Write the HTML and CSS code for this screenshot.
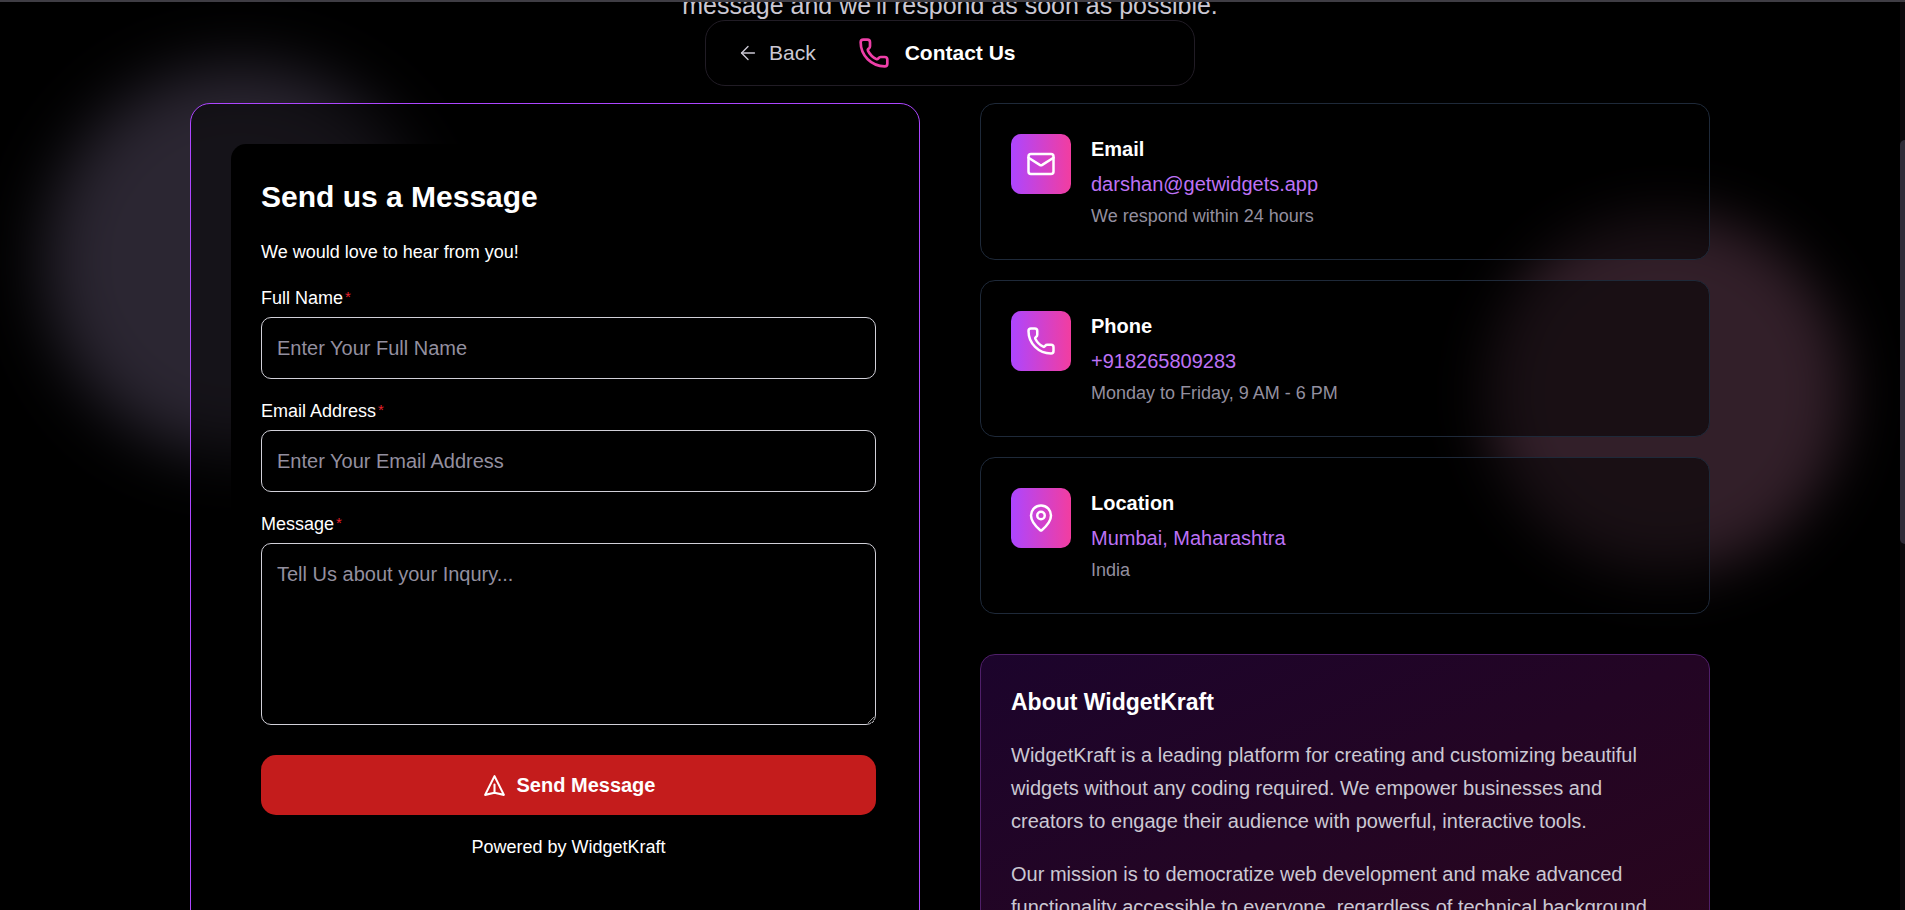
FILE: index.html
```html
<!DOCTYPE html>
<html lang="en">
<head>
    <meta charset="UTF-8">
    <meta name="viewport" content="width=device-width, initial-scale=1.0">
    <title>Contact Us - WidgetKraft</title>
    <link rel="stylesheet" href="styles.css">
</head>
<body>
    <div class="page">
        <!-- Background glow -->
        <div class="glow glow-left"></div>
        <div class="glow glow-right"></div>

        <!-- Floating nav -->
        <nav class="navbar">
            <a href="#" class="back-link">
                <svg class="icon-back" viewBox="0 0 24 24"><path d="m12 19-7-7 7-7"/><path d="M19 12H5"/></svg>
                Back
            </a>
            <div class="nav-title">
                <svg class="icon-nav" viewBox="0 0 24 24"><path d="M13.832 16.568a1 1 0 0 0 1.213-.303l.355-.465A2 2 0 0 1 17 15h3a2 2 0 0 1 2 2v3a2 2 0 0 1-2 2A18 18 0 0 1 2 4a2 2 0 0 1 2-2h3a2 2 0 0 1 2 2v3a2 2 0 0 1-.8 1.6l-.468.351a1 1 0 0 0-.292 1.233 14 14 0 0 0 6.392 6.384"/></svg>
                <h1>Contact Us</h1>
            </div>
        </nav>

        <main class="container">
            <p class="intro">message and we'll respond as soon as possible.</p>

            <div class="contact-grid">
                <!-- Contact form -->
                <section class="form-card">
                    <form class="contact-form">
                        <h2>Send us a Message</h2>
                        <p class="form-text">We would love to hear from you!</p>

                        <div class="field">
                            <label for="full-name">Full Name<span class="required">*</span></label>
                            <input type="text" id="full-name" placeholder="Enter Your Full Name">
                        </div>
                        <div class="field">
                            <label for="email">Email Address<span class="required">*</span></label>
                            <input type="email" id="email" placeholder="Enter Your Email Address">
                        </div>
                        <div class="field">
                            <label for="message">Message<span class="required">*</span></label>
                            <textarea id="message" placeholder="Tell Us about your Inqury..."></textarea>
                        </div>

                        <button type="submit" class="btn">
                            <svg class="icon-send" viewBox="0 0 24 24"><path d="m12 19 9 2-9-18-9 18 9-2zm0 0v-8"/></svg>
                            Send Message
                        </button>
                        <p class="powered">Powered by WidgetKraft</p>
                    </form>
                </section>

                <!-- Contact details -->
                <div class="info-column">
                    <div class="info-list">
                        <div class="info-card">
                            <div class="info-icon">
                                <svg viewBox="0 0 24 24"><path d="m22 7-8.991 5.727a2 2 0 0 1-2.009 0L2 7"/><rect x="2" y="4" width="20" height="16" rx="2"/></svg>
                            </div>
                            <div>
                                <h3>Email</h3>
                                <a href="mailto:darshan@getwidgets.app" class="info-value">darshan@getwidgets.app</a>
                                <p class="info-note">We respond within 24 hours</p>
                            </div>
                        </div>
                        <div class="info-card">
                            <div class="info-icon">
                                <svg viewBox="0 0 24 24"><path d="M13.832 16.568a1 1 0 0 0 1.213-.303l.355-.465A2 2 0 0 1 17 15h3a2 2 0 0 1 2 2v3a2 2 0 0 1-2 2A18 18 0 0 1 2 4a2 2 0 0 1 2-2h3a2 2 0 0 1 2 2v3a2 2 0 0 1-.8 1.6l-.468.351a1 1 0 0 0-.292 1.233 14 14 0 0 0 6.392 6.384"/></svg>
                            </div>
                            <div>
                                <h3>Phone</h3>
                                <a href="tel:+918265809283" class="info-value">+918265809283</a>
                                <p class="info-note">Monday to Friday, 9 AM - 6 PM</p>
                            </div>
                        </div>
                        <div class="info-card">
                            <div class="info-icon">
                                <svg viewBox="0 0 24 24"><path d="M20 10c0 4.993-5.539 10.193-7.399 11.799a1 1 0 0 1-1.202 0C9.539 20.193 4 14.993 4 10a8 8 0 0 1 16 0"/><circle cx="12" cy="10" r="3"/></svg>
                            </div>
                            <div>
                                <h3>Location</h3>
                                <p class="info-value">Mumbai, Maharashtra</p>
                                <p class="info-note">India</p>
                            </div>
                        </div>
                    </div>

                    <section class="about-card">
                        <h2>About WidgetKraft</h2>
                        <p>WidgetKraft is a leading platform for creating and customizing beautiful widgets without any coding required. We empower businesses and creators to engage their audience with powerful, interactive tools.</p>
                        <p>Our mission is to democratize web development and make advanced functionality accessible to everyone, regardless of technical background.</p>
                    </section>
                </div>
            </div>
        </main>
    </div>
    <div class="scroll-track">
        <div class="scroll-thumb"></div>
    </div>
</body>
</html>
```
FILE: styles.css
```css
* {
    margin: 0;
    padding: 0;
    box-sizing: border-box;
}
body {
    font-family: 'Liberation Sans', Arial, sans-serif;
    font-size: 20px;
    line-height: 30px;
    background: #000;
    color: white;
    height: 100vh;
    display: flex;
    overflow: hidden;
}
body::before {
    content: "";
    position: fixed;
    top: 0;
    left: 0;
    right: 0;
    height: 2px;
    background: #3f3d44;
    z-index: 20;
}
a {
    color: inherit;
    text-decoration: none;
}
svg {
    fill: none;
    stroke: currentColor;
    stroke-width: 2;
    stroke-linecap: round;
    stroke-linejoin: round;
    flex-shrink: 0;
}
.page {
    position: relative;
    flex: 1;
    overflow: hidden;
}

/* Background glow */
.glow {
    position: absolute;
    border-radius: 50%;
}
.glow-left {
    top: 66px;
    left: 45px;
    width: 390px;
    height: 390px;
    background: #2b2632;
    filter: blur(32px);
}
.glow-right {
    top: 213px;
    right: 55px;
    width: 360px;
    height: 360px;
    background: #321f29;
    filter: blur(28px);
}

/* Floating nav */
.navbar {
    position: absolute;
    top: 20px;
    left: 50%;
    transform: translateX(-50%);
    width: 490px;
    display: flex;
    align-items: center;
    gap: 42px;
    padding: 16px 31px;
    background: #000;
    border: 1px solid #211c25;
    border-radius: 20px;
    z-index: 10;
}
.back-link {
    display: flex;
    align-items: center;
    gap: 10px;
    font-size: 21px;
    color: #cbc8d3;
}
.icon-back {
    width: 22px;
    height: 22px;
    stroke-width: 1.5;
}
.nav-title {
    display: flex;
    align-items: center;
    gap: 15px;
}
.nav-title h1 {
    font-size: 21px;
}
.icon-nav {
    width: 32px;
    height: 32px;
    color: #ee3fa8;
}

/* Content */
.container {
    position: relative;
    max-width: 1600px;
    margin: 0 auto;
    padding: 0 40px;
}
.intro {
    margin-top: -15px;
    margin-bottom: 78px;
    font-size: 25px;
    line-height: 40px;
    text-align: center;
    color: #cbc8d3;
}
.contact-grid {
    display: grid;
    grid-template-columns: 1fr 1fr;
    gap: 60px;
}

/* Contact form */
.form-card {
    padding: 40px 13px 40px 40px;
    background: rgba(0, 0, 0, 0.5);
    border: 1px solid #ad46ff;
    border-radius: 20px;
}
.contact-form {
    padding: 30px;
    background: #000;
    border-radius: 15px;
}
.contact-form h2 {
    margin-bottom: 20px;
    font-size: 30px;
    line-height: 45px;
}
.form-text {
    margin-bottom: 20px;
    font-size: 18px;
    line-height: 26px;
}
.field {
    display: flex;
    flex-direction: column;
    gap: 6px;
    margin-bottom: 19px;
}
.field label {
    font-size: 18px;
    line-height: 26px;
}
.required {
    margin-left: 2px;
    font-size: 15px;
    line-height: 20px;
    vertical-align: 2px;
    color: #e7222b;
}
.field input,
.field textarea {
    width: 100%;
    padding: 15px;
    font-family: inherit;
    font-size: 20px;
    line-height: 30px;
    color: white;
    background: #000;
    border: 1px solid #d1d0d8;
    border-radius: 10px;
}
.field input {
    height: 62px;
}
.field textarea {
    height: 182px;
    resize: vertical;
}
.field ::placeholder {
    color: #938f9f;
}
.btn {
    display: flex;
    justify-content: center;
    align-items: center;
    gap: 10px;
    width: 100%;
    margin-top: 30px;
    padding: 15px;
    font-family: inherit;
    font-size: 20px;
    font-weight: 700;
    line-height: 30px;
    color: white;
    background: #c41c1c;
    border: none;
    border-radius: 15px;
    cursor: pointer;
}
.btn:hover {
    background: #a81717;
}
.icon-send {
    width: 25px;
    height: 25px;
}
.powered {
    margin-top: 19px;
    font-size: 18px;
    line-height: 26px;
    text-align: center;
}

/* Contact details */
.info-column {
    display: flex;
    flex-direction: column;
    gap: 40px;
}
.info-list {
    display: flex;
    flex-direction: column;
    gap: 20px;
}
.info-card {
    display: flex;
    align-items: flex-start;
    gap: 20px;
    padding: 30px;
    background: rgba(0, 0, 0, 0.5);
    border: 1px solid #1e2939;
    border-radius: 15px;
}
.info-icon {
    display: flex;
    justify-content: center;
    align-items: center;
    width: 60px;
    height: 60px;
    background: linear-gradient(to right, #ad46ff, #f23da0);
    border-radius: 10px;
}
.info-icon svg {
    width: 30px;
    height: 30px;
}
.info-card h3 {
    margin-bottom: 5px;
    font-size: 20px;
}
.info-value {
    display: block;
    color: #bd72f5;
}
.info-note {
    margin-top: 5px;
    font-size: 18px;
    line-height: 25px;
    color: #938f9f;
}
.about-card {
    padding: 30px;
    background: linear-gradient(to bottom right, #1c042c, #2a061c);
    border: 1px solid #4f1f69;
    border-radius: 15px;
}
.about-card h2 {
    margin-bottom: 20px;
    font-size: 23px;
    line-height: 34px;
}
.about-card p {
    margin-bottom: 20px;
    line-height: 33px;
    color: #cbc8d3;
}

/* Scrollbar */
.scroll-track {
    width: 5px;
    background: #0d0a0d;
}
.scroll-thumb {
    height: 404px;
    margin-top: 140px;
    background: #2f2b37;
    border-radius: 5px 0 0 5px;
}
```
